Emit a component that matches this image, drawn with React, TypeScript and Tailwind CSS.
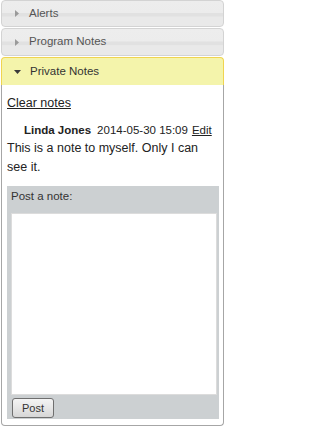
import React from 'react';

const RightTriangle = () => (
    <svg width="4" height="7" viewBox="0 0 4 7" className="shrink-0">
        <path d="M0 0 L4 3.5 L0 7 Z" fill="#9a9a9a" />
    </svg>
);

const DownTriangle = () => (
    <svg width="7" height="4" viewBox="0 0 7 4" className="shrink-0">
        <path d="M0 0 L7 0 L3.5 4 Z" fill="#3a3a3a" />
    </svg>
);

const ClosedHeader = ({ label, className = '' }: { label: string; className?: string }) => (
    <div
        className={`flex items-center pl-[13px] gap-[10px] border border-[#d3d3d3] rounded-[4px] bg-[linear-gradient(to_bottom,#ededed_0%,#ececec_46%,#e1e1e1_50%,#e1e1e1_60%,#e9e9e9_64%,#e9e9e9_100%)] text-[11.5px] text-[#555] ${className}`}
    >
        <RightTriangle />
        <span>{label}</span>
    </div>
);

const App = () => {
    return (
        <div className="w-[225px] h-[428px] bg-white px-px font-['Liberation_Sans',Arial,sans-serif] text-[#222]">
            <ClosedHeader label="Alerts" className="h-[27px]" />
            <ClosedHeader label="Program Notes" className="mt-px h-[28px]" />

            <div className="mt-px flex items-center h-[28px] pl-[12px] gap-[9px] border border-[#f0d450] border-b-0 rounded-t-[4px] bg-[#f4f4ab] text-[11.5px] text-[#333]">
                <DownTriangle />
                <span>Private Notes</span>
            </div>

            <div className="h-[341px] border border-t-0 border-[#a6a6a6] rounded-b-[4px] bg-white px-[5px] pt-[8px]">
                <a href="#" className="block text-[12.5px] leading-[20px] underline text-[#222]">Clear notes</a>

                <div className="mt-[9px] pl-[17px] text-[11.5px] leading-[17px]">
                    <span className="font-bold">Linda Jones</span>
                    <span className="ml-[6px]">2014-05-30 15:09</span>
                    <a href="#" className="ml-[4px] underline text-[#222]">Edit</a>
                </div>
                <p className="text-[12.5px] leading-[19px] pr-[10px]">This is a note to myself. Only I can see it.</p>

                <div className="mt-[9px] mr-[-1px] bg-[#ccd0d2] pl-[4px] pt-[3px] pb-px">
                    <div className="text-[11.5px] leading-[14px] text-[#333]">Post a note:</div>
                    <textarea className="block mt-[10px] w-[206px] h-[182px] bg-white border border-[#dcdcdc] resize-none outline-none" />
                    <button className="mt-[3px] ml-px h-[20px] w-[42px] border border-[#6f6f6f] rounded-[3px] bg-[linear-gradient(to_bottom,#f4f4f4_0%,#e6e6e6_50%,#d6d6d6_100%)] text-[11px] text-[#333] flex items-center justify-center">
                        Post
                    </button>
                </div>
            </div>
        </div>
    );
};

export default App;
